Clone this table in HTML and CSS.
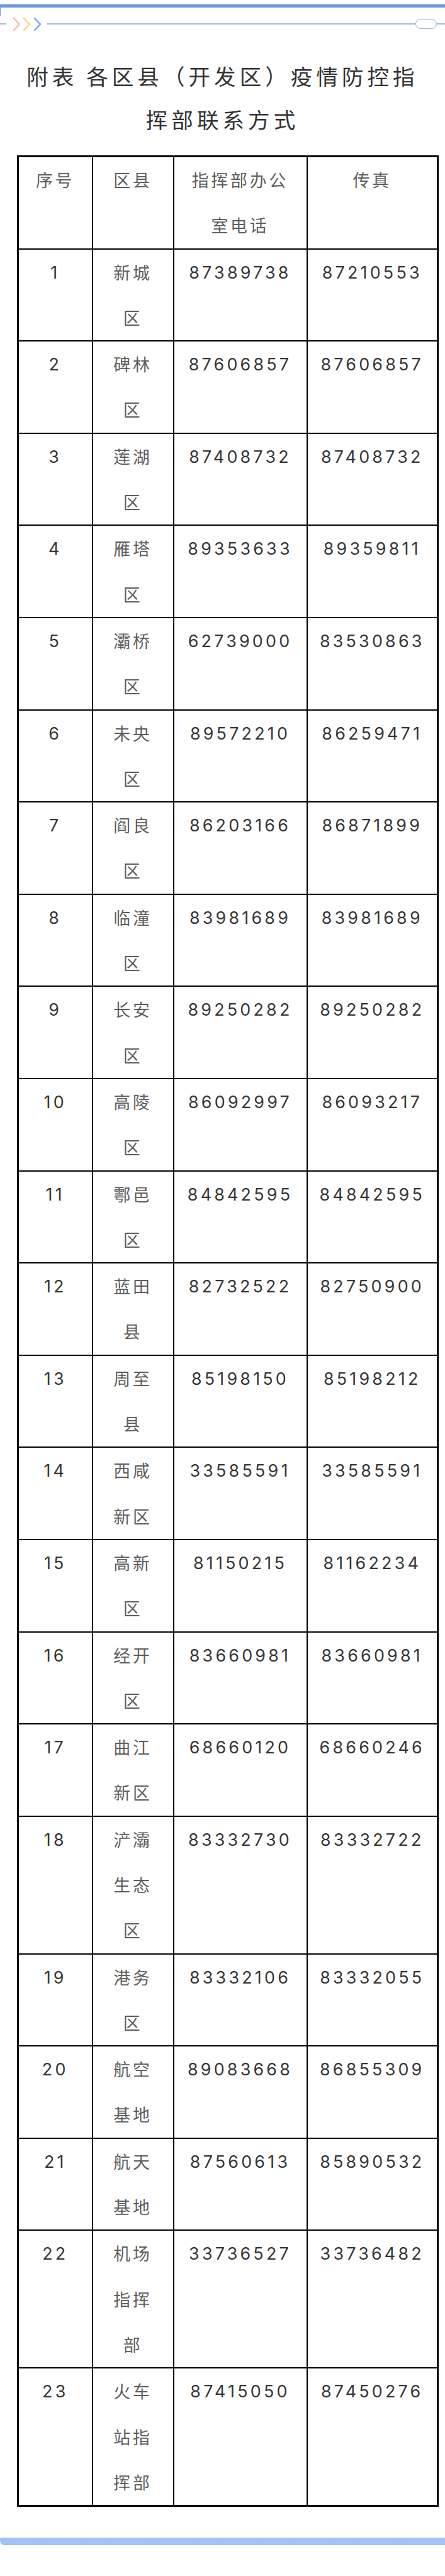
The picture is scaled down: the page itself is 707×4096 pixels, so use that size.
FILE: index.html
```html
<!DOCTYPE html>
<html lang="zh-CN">
<head>
<meta charset="utf-8">
<title>附表 各区县（开发区）疫情防控指挥部联系方式</title>
<link rel="stylesheet" href="styles.css">
</head>
<body>
<div class="page">
  <div class="topline"><div class="topbar"></div></div>
  <div class="deco">
    <span class="seg seg-left"></span>
    <svg class="chevrons" width="50" height="25" viewBox="0 0 50 25">
      <defs><filter id="soft" x="-20%" y="-20%" width="140%" height="140%"><feGaussianBlur stdDeviation="0.7"/></filter></defs>
      <g fill="none" stroke-width="2.6" stroke-linecap="round" stroke-linejoin="round" filter="url(#soft)">
        <polyline points="4,3 13,12.5 4,22" stroke="#f6c3bb"/>
        <polyline points="20,3 29,12.5 20,22" stroke="#f8d98c"/>
        <polyline points="37,3 46,12.5 37,22" stroke="#8fb1e3"/>
      </g>
    </svg>
    <span class="seg seg-main"></span>
    <span class="pill"></span>
    <span class="seg seg-right"></span>
  </div>

  <h1 class="title">附表 各区县（开发区）疫情防控指挥部联系方式</h1>

  <table class="contacts">
    <colgroup>
      <col class="c-no"><col class="c-area"><col class="c-tel"><col class="c-fax">
    </colgroup>
    <thead>
      <tr><th>序号</th><th>区县</th><th>指挥部办公室电话</th><th>传真</th></tr>
    </thead>
    <tbody>
      <tr><td class="num">1</td><td>新城区</td><td class="num">87389738</td><td class="num">87210553</td></tr>
      <tr><td class="num">2</td><td>碑林区</td><td class="num">87606857</td><td class="num">87606857</td></tr>
      <tr><td class="num">3</td><td>莲湖区</td><td class="num">87408732</td><td class="num">87408732</td></tr>
      <tr><td class="num">4</td><td>雁塔区</td><td class="num">89353633</td><td class="num">89359811</td></tr>
      <tr><td class="num">5</td><td>灞桥区</td><td class="num">62739000</td><td class="num">83530863</td></tr>
      <tr><td class="num">6</td><td>未央区</td><td class="num">89572210</td><td class="num">86259471</td></tr>
      <tr><td class="num">7</td><td>阎良区</td><td class="num">86203166</td><td class="num">86871899</td></tr>
      <tr><td class="num">8</td><td>临潼区</td><td class="num">83981689</td><td class="num">83981689</td></tr>
      <tr><td class="num">9</td><td>长安区</td><td class="num">89250282</td><td class="num">89250282</td></tr>
      <tr><td class="num">10</td><td>高陵区</td><td class="num">86092997</td><td class="num">86093217</td></tr>
      <tr><td class="num">11</td><td>鄠邑区</td><td class="num">84842595</td><td class="num">84842595</td></tr>
      <tr><td class="num">12</td><td>蓝田县</td><td class="num">82732522</td><td class="num">82750900</td></tr>
      <tr><td class="num">13</td><td>周至县</td><td class="num">85198150</td><td class="num">85198212</td></tr>
      <tr><td class="num">14</td><td>西咸新区</td><td class="num">33585591</td><td class="num">33585591</td></tr>
      <tr><td class="num">15</td><td>高新区</td><td class="num">81150215</td><td class="num">81162234</td></tr>
      <tr><td class="num">16</td><td>经开区</td><td class="num">83660981</td><td class="num">83660981</td></tr>
      <tr><td class="num">17</td><td>曲江新区</td><td class="num">68660120</td><td class="num">68660246</td></tr>
      <tr><td class="num">18</td><td>浐灞生态区</td><td class="num">83332730</td><td class="num">83332722</td></tr>
      <tr><td class="num">19</td><td>港务区</td><td class="num">83332106</td><td class="num">83332055</td></tr>
      <tr><td class="num">20</td><td>航空基地</td><td class="num">89083668</td><td class="num">86855309</td></tr>
      <tr><td class="num">21</td><td>航天基地</td><td class="num">87560613</td><td class="num">85890532</td></tr>
      <tr><td class="num">22</td><td>机场指挥部</td><td class="num">33736527</td><td class="num">33736482</td></tr>
      <tr><td class="num">23</td><td>火车站指挥部</td><td class="num">87415050</td><td class="num">87450276</td></tr>
    </tbody>
  </table>

  <div class="bottomline"><div class="bottombar"></div></div>
</div>
</body>
</html>
```
FILE: styles.css
```css
html, body {
  margin: 0;
  padding: 0;
  background: #ffffff;
}

.page {
  width: 707px;
  min-height: 4096px;
  font-family: "Noto Sans CJK SC", "Noto Sans", sans-serif;
  color: #333333;
}

/* top decorations */
.topline {
  height: 18px;
  border-left: 1.5px solid #7097d6;
  box-sizing: border-box;
}
.topbar {
  margin-top: 7px;
  height: 4.5px;
  background: #7097d6;
  box-shadow: 0 -1px 0 #dfe8f6;
}

.deco {
  display: flex;
  align-items: center;
  height: 26px;
}
.seg {
  height: 1.6px;
  background: #a9bccd;
}
.seg-left { width: 10px; }
.chevrons {
  display: block;
  margin-left: 8px;
  margin-right: 7px;
  flex: none;
}
.seg-main { flex: 1; }
.seg-right { width: 13px; }
.pill {
  flex: none;
  width: 34px;
  height: 15.5px;
  box-sizing: border-box;
  border: 1.6px solid #9ab2d3;
  border-radius: 8px;
}

/* title */
.title {
  margin: 35px 27px 0 27px;
  padding: 0 10px;
  font-size: 34.6px;
  line-height: 69px;
  font-weight: 400;
  letter-spacing: 6px;
  text-align: center;
  color: #333333;
}

/* table */
.contacts {
  margin: 23px 0 0 27px;
  width: 667px;
  table-layout: fixed;
  border-collapse: collapse;
  border: 3px solid #000000;
}
.c-no { width: 118px; }
.c-area { width: 129px; }
.c-tel { width: 212px; }
.c-fax { width: 208px; }

.contacts th,
.contacts td {
  border: 2px solid #000000;
  padding: 0 19px;
  vertical-align: top;
  text-align: center;
  font-size: 26.9px;
  line-height: 72.3px;
  font-weight: 400;
  letter-spacing: 3.85px;
  color: #5e5e5e;
}
.contacts td.num {
  font-family: "Inter", "Noto Sans", sans-serif;
  color: #363636;
  letter-spacing: 4.2px;
  white-space: nowrap;
}

/* bottom decoration */
.bottomline {
  margin-top: 41px;
  padding-top: 8px;
  background: linear-gradient(#ffffff, #f6f9fe);
}
.bottombar {
  height: 10.7px;
  background: #a3c3f2;
  border-bottom: 1px solid #9cb8e4;
  border-bottom-left-radius: 8px;
}
```
